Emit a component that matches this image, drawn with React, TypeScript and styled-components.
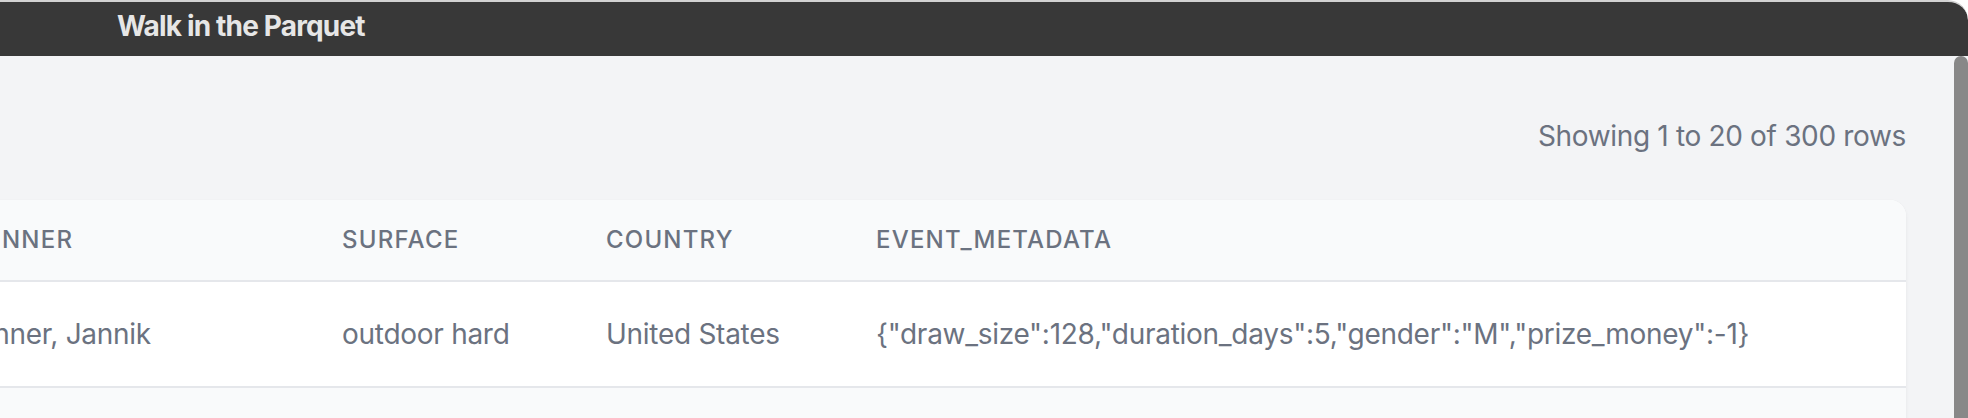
import React from "react";
import styled, { createGlobalStyle } from "styled-components";

const GlobalStyle = createGlobalStyle`
  html, body {
    margin: 0;
    padding: 0;
    background: #ffffff;
    font-family: Inter, "Noto Sans", "Liberation Sans", sans-serif;
    -webkit-font-smoothing: antialiased;
  }
  * { box-sizing: border-box; }
`;

const Window = styled.div`
  display: flex;
  flex-direction: column;
  height: 418px;
  overflow: hidden;
  background: #f3f4f6;
  border-top-right-radius: 20px;
`;

const TitleBar = styled.div`
  flex: 0 0 auto;
  height: 56px;
  display: flex;
  align-items: center;
  padding: 0 0 6px 117px;
  background: #383838;
  border-top: 2px solid #d2d2d2;
  border-top-right-radius: 20px;
  color: #e6e6e6;
  font-size: 28px;
  font-weight: 700;
  letter-spacing: -0.03em;
`;

const Body = styled.div`
  flex: 1 1 auto;
  display: flex;
  min-height: 0;
`;

const Content = styled.main`
  flex: 1 1 auto;
  min-width: 0;
  padding: 48px 48px 0 0;
`;

const Toolbar = styled.div`
  height: 64px;
  margin-bottom: 32px;
  display: flex;
  align-items: center;
  justify-content: flex-end;
  color: #6b7280;
  font-size: 28px;
  line-height: 40px;
  letter-spacing: -0.012em;
`;

const Card = styled.div`
  margin-left: -79px;
  background: #ffffff;
  border-radius: 16px;
  overflow: hidden;
  box-shadow: 0 2px 4px rgba(0, 0, 0, 0.05), 0 0 1px rgba(0, 0, 0, 0.06);
`;

const Table = styled.table`
  width: 100%;
  border-collapse: collapse;
  table-layout: fixed;
`;

const HeadRow = styled.tr`
  background: #f9fafb;
  border-bottom: 2px solid #e5e7eb;
`;

const Th = styled.th`
  padding: 24px 48px;
  text-align: left;
  font-size: 24px;
  line-height: 32px;
  font-weight: 500;
  letter-spacing: 0.05em;
  text-transform: uppercase;
  color: #6b7280;
  white-space: nowrap;
`;

const Row = styled.tr<{ $striped: boolean }>`
  background: ${(p) => (p.$striped ? "#f9fafb" : "#ffffff")};
  border-bottom: 2px solid #e5e7eb;
`;

const Td = styled.td`
  padding: 32px 48px;
  font-size: 28px;
  line-height: 40px;
  letter-spacing: -0.01em;
  color: #6b7280;
  white-space: nowrap;
`;

const ScrollThumb = styled.div`
  flex: 0 0 14px;
  background: #888888;
  border-radius: 7px 7px 0 0;
`;

const columns = [
  { key: "winner", label: "winner", width: 373 },
  { key: "surface", label: "surface", width: 264 },
  { key: "country", label: "country", width: 270 },
  { key: "event_metadata", label: "event_metadata" },
];

const rows = [
  {
    winner: "Sinner, Jannik",
    surface: "outdoor hard",
    country: "United States",
    event_metadata:
      '{"draw_size":128,"duration_days":5,"gender":"M","prize_money":-1}',
  },
  {
    winner: "Alcaraz, Carlos",
    surface: "outdoor hard",
    country: "United States",
    event_metadata:
      '{"draw_size":96,"duration_days":12,"gender":"M","prize_money":-1}',
  },
];

export default function App() {
  return (
    <>
      <GlobalStyle />
      <Window>
        <TitleBar>Walk in the Parquet</TitleBar>
        <Body>
          <Content>
            <Toolbar>Showing 1 to 20 of 300 rows</Toolbar>
            <Card>
              <Table>
                <colgroup>
                  {columns.map((c) => (
                    <col key={c.key} style={c.width ? { width: c.width } : undefined} />
                  ))}
                </colgroup>
                <thead>
                  <HeadRow>
                    {columns.map((c) => (
                      <Th key={c.key}>{c.label}</Th>
                    ))}
                  </HeadRow>
                </thead>
                <tbody>
                  {rows.map((r, i) => (
                    <Row key={i} $striped={i % 2 === 1}>
                      <Td>{r.winner}</Td>
                      <Td>{r.surface}</Td>
                      <Td>{r.country}</Td>
                      <Td>{r.event_metadata}</Td>
                    </Row>
                  ))}
                </tbody>
              </Table>
            </Card>
          </Content>
          <ScrollThumb />
        </Body>
      </Window>
    </>
  );
}
